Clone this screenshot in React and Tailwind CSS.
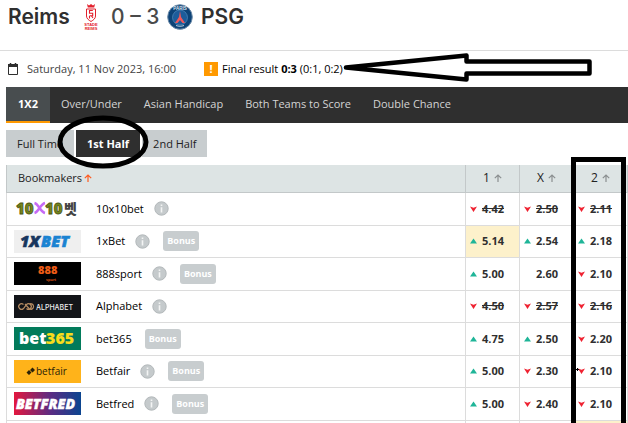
import React from 'react';
import clsx from 'clsx';

const MARKETS = ['1X2', 'Over/Under', 'Asian Handicap', 'Both Teams to Score', 'Double Chance'];

const PERIODS = ['Full Time', '1st Half', '2nd Half'];

const BOOKMAKERS = [
  { name: '10x10bet', info: true, bonus: false, off: true, odds: [['down', '4.42'], ['down', '2.50'], ['down', '2.11']] },
  { name: '1xBet', info: true, bonus: true, best: 0, odds: [['up', '5.14'], ['up', '2.54'], ['up', '2.18']] },
  { name: '888sport', info: true, bonus: true, odds: [['up', '5.00'], [null, '2.60'], ['down', '2.10']] },
  { name: 'Alphabet', info: true, bonus: false, off: true, odds: [['down', '4.50'], ['down', '2.57'], ['down', '2.16']] },
  { name: 'bet365', info: false, bonus: true, odds: [['up', '4.75'], ['up', '2.50'], ['down', '2.20']] },
  { name: 'Betfair', info: true, bonus: true, odds: [['up', '5.00'], ['down', '2.30'], ['down', '2.10']] },
  { name: 'Betfred', info: true, bonus: true, odds: [['up', '5.00'], ['down', '2.40'], ['down', '2.10']] },
];

const ReimsCrest = () => (
  <svg className="w-4 h-[26px]" viewBox="0 0 16 26" fill="none">
    <path d="M4 0l2 1.500L8 0l2 1.500L12 0l-.8 3.500H4.800z" fill="#e2202c" />
    <path d="M3.500 5h9v7c0 2.500-2 4-4.500 5.500C5.500 16 3.500 14.500 3.500 12z" fill="#fff" stroke="#e2202c" />
    <path d="M9.800 6.500H6.500v2.800h3.200v2.500H6.500M6.500 14.500v-2.500M8.500 12l1.500 2" stroke="#e2202c" strokeWidth="1.100" />
    <text x="8" y="21.500" fontSize="4" fontWeight="700" textAnchor="middle" fill="#e2202c" fontFamily="Liberation Sans">STADE</text>
    <text x="8" y="25.500" fontSize="4" fontWeight="700" textAnchor="middle" fill="#e2202c" fontFamily="Liberation Sans">REIMS</text>
  </svg>
);

const ParisCrest = () => (
  <svg className="w-[26px] h-[26px]" viewBox="0 0 26 26">
    <circle cx="13" cy="13" r="12.300" fill="#0d4377" stroke="#6c8aa8" />
    <circle cx="13" cy="13.500" r="7.500" fill="#1d5c9a" stroke="#5d95c4" strokeWidth=".6" />
    <path d="M13 7l1 6 4 6h-2.500L13 16l-2.500 3H8l4-6z" fill="#f0595c" />
    <path d="M9 21.500c2.500 1 5.500 1 8 0" fill="none" stroke="#b9cde0" />
    <text x="13" y="5.500" fontSize="4.500" fontWeight="700" textAnchor="middle" fill="#dfe7ef" fontFamily="Liberation Sans">PARIS</text>
  </svg>
);

const Calendar = () => (
  <svg className="w-3 h-3" viewBox="0 0 12 12" fill="none" stroke="#2f2f2f">
    <path d="M1.500 2.500h9v9h-9z" />
    <path d="M1 2.500h10" strokeWidth="3" />
    <path d="M3.500 0v2M8.500 0v2" strokeWidth="1.500" />
  </svg>
);

const SortArrow = ({ active }) => (
  <svg
    className={clsx('w-2 h-2 shrink-0', active ? 'text-[#ff5a1f]' : 'text-[#8b8f90]')}
    viewBox="0 0 8 8"
    fill="none"
    stroke="currentColor"
    strokeWidth="1.200"
  >
    <path d="M4 8V1M.8 4.200L4 1l3.200 3.200" />
  </svg>
);

const Move = ({ dir }) => (
  <svg className="w-[7px] h-[6px] shrink-0" viewBox="0 0 7 6">
    {dir === 'up' && <path d="M3.500 .5L7 5.500H0z" fill="#1fb598" />}
    {dir === 'down' && <path d="M0 .5l3.500 1.200L7 .5 3.500 6z" fill="#ef2231" />}
  </svg>
);

const Info = () => (
  <svg className="w-[15px] h-[15px]" viewBox="0 0 15 15">
    <circle cx="7.500" cy="7.500" r="6.700" fill="#c5cacc" stroke="#b3b8ba" />
    <path d="M6.700 3.500h1.600v1.600H6.700zM6.700 6.200h1.600v5.300H6.700z" fill="#f3f4f4" />
  </svg>
);

const Logo = ({ name }) => (
  <svg className="w-[67px] h-[23px] shrink-0" viewBox="0 0 67 23" fontFamily="Open Sans" fontWeight="800" role="img" aria-label={name}>
    {name === '10x10bet' && (
      <g fontSize="15">
        <text x="2" y="17" fill="#75851c" stroke="#4b5614" strokeWidth=".8">10</text>
        <path d="M20.500 6c4 1 6 9 10.500 10M31 6c-4.500 1-6.500 9-10.500 10" fill="none" stroke="#c66bf5" strokeWidth="2.600" />
        <text x="31" y="17" fill="#75851c" stroke="#4b5614" strokeWidth=".8">10</text>
        <text x="50" y="16.500" fontSize="14" fill="#444" fontFamily="Noto Sans CJK KR">벳</text>
      </g>
    )}
    {name === '1xBet' && (
      <g fontSize="16" fontStyle="italic" strokeWidth=".6">
        <rect width="67" height="23" fill="#efefef" />
        <text x="6" y="17" fill="#17365e" stroke="#17365e">1X</text>
        <text x="27" y="17" fill="#1a83d2" stroke="#1a83d2">BET</text>
      </g>
    )}
    {name === '888sport' && (
      <g fill="#ee5c16">
        <rect width="67" height="23" fill="#000" />
        <text x="24" y="12" fontSize="11">888</text>
        <text x="32" y="19" fontSize="4" fontWeight="600">sport</text>
      </g>
    )}
    {name === 'Alphabet' && (
      <g>
        <rect width="67" height="23" fill="#131519" />
        <path d="M9.500 9.500a2.800 2.800 0 1 0 0 4l3-4a2.800 2.800 0 1 1 0 4M11 9l4.500 5a2.800 2.800 0 1 0 0-5" fill="none" stroke="#b58c62" strokeWidth="1.200" />
        <text x="22" y="14.500" fontSize="7" fontWeight="500" fill="#eee" fontFamily="Inter">ALPHABET</text>
      </g>
    )}
    {name === 'bet365' && (
      <g fontSize="16">
        <rect width="67" height="23" fill="#027b5b" />
        <text x="5" y="17" fill="#fff">bet</text>
        <text x="32" y="17" fill="#f9dc1c">365</text>
      </g>
    )}
    {name === 'Betfair' && (
      <g fill="#2b2208">
        <rect width="67" height="23" fill="#ffb31a" />
        <path d="M12.500 12.500l2.500-2.500 2.500 2.500-2.500 2.500zM16 10l2.500-2.500L21 10l-2.500 2.500z" />
        <text x="22" y="15" fontSize="10" fontWeight="500">betfair</text>
      </g>
    )}
    {name === 'Betfred' && (
      <g>
        <defs>
          <linearGradient id="fred">
            <stop offset="0" stopColor="#e3173e" />
            <stop offset=".55" stopColor="#5a2c83" />
            <stop offset="1" stopColor="#0b4590" />
          </linearGradient>
        </defs>
        <rect width="67" height="23" fill="url(#fred)" />
        <text x="2" y="17" fontSize="14" fontStyle="italic" fill="#fff" stroke="#fff" strokeWidth=".4">BETFRED</text>
      </g>
    )}
  </svg>
);

const Annotations = () => (
  <svg className="absolute left-0 top-0 w-[628px] h-[430px] pointer-events-none" viewBox="0 0 628 430" fill="none" stroke="#000" strokeWidth="5">
    <path d="M346 67.500L466.500 55.500V61.500H589.500V73.500H466.500V79.500z" strokeWidth="4.500" strokeLinejoin="round" />
    <ellipse cx="103" cy="142" rx="43" ry="24" />
    <path d="M573.500 440V159.500H623.500V440" />
    <path d="M576 369.500h3M577.500 368v3" strokeWidth="1" />
  </svg>
);

export default function App() {
  return (
    <div className="relative h-screen overflow-hidden bg-white font-['Open_Sans','Noto_Sans',sans-serif] text-[11px] leading-4 text-black">
      <header className="flex h-[51px] items-center border-b border-[#dcdcdc] pb-4 pl-2 font-['Inter',sans-serif] text-[21px] leading-6 text-[#2f2f2f]">
        <h1 className="flex items-center font-semibold">
          <span className="w-[75px]">Reims</span>
          <ReimsCrest />
          <span className="w-[68px] pl-3 font-medium text-[#4a4a4a] whitespace-nowrap">0 – 3</span>
          <ParisCrest />
          <span className="pl-2">PSG</span>
        </h1>
      </header>

      <div className="flex h-9 items-center pl-[7px]">
        <Calendar />
        <span className="pl-2 text-[#444]">Saturday, 11 Nov 2023, 16:00</span>
        <span className="ml-7 flex h-[14px] w-[14px] items-center justify-center bg-[#ff9900] font-bold text-white">!</span>
        <span className="pl-1">
          Final result <strong>0:3</strong> (0:1, 0:2)
        </span>
      </div>

      <nav className="ml-1.5 flex h-9 bg-[#2f2f2f]">
        {MARKETS.map((market, i) => (
          <button
            key={market}
            className={clsx(
              'border-b-2',
              i === 0 ? 'border-[#ff9900] bg-[#484d4f] px-3 font-bold text-white' : 'border-transparent px-[11px] font-medium text-[#d4d4d4]'
            )}
          >
            {market}
          </button>
        ))}
      </nav>

      <div className="ml-1.5 mt-[7px] flex gap-0.5">
        {PERIODS.map((period, i) => (
          <button
            key={period}
            className={clsx('h-[27px] px-[11px]', i === 1 ? 'bg-[#2f2f2f] font-bold text-white' : 'bg-[#c8cdcf] text-[#222]')}
          >
            {period}
          </button>
        ))}
      </div>

      <div className="ml-1.5 mt-2">
        <table className="w-full table-fixed border-collapse">
          <thead>
            <tr className="h-[27px] bg-[#dde4e4] text-[#222]">
              <th className="border-b border-l border-[#c3c8c9] pl-[11px] text-left font-normal">
                <span className="flex items-center gap-0.5">
                  Bookmakers <SortArrow active />
                </span>
              </th>
              {['1', 'X', '2'].map((outcome) => (
                <th key={outcome} className="w-[54px] border-x border-b border-[#c3c8c9] font-normal">
                  <span className="flex items-center justify-center gap-1 text-xs">
                    {outcome} <SortArrow />
                  </span>
                </th>
              ))}
            </tr>
          </thead>
          <tbody>
            {BOOKMAKERS.map((b) => (
              <tr key={b.name} className="border-b border-[#dcdcdc] odd:h-[33px] even:h-8">
                <td className="border-l border-[#dcdcdc] pl-[7px]">
                  <div className="flex items-center">
                    <Logo name={b.name} />
                    <a href="#" className="pl-[15px]">{b.name}</a>
                    {b.info && <span className="pl-[10px]"><Info /></span>}
                    {b.bonus && (
                      <button className="ml-[13px] h-5 rounded-[3px] bg-[#c8cdcf] px-1 text-[9px] font-bold text-white">Bonus</button>
                    )}
                  </div>
                </td>
                {b.odds.map(([dir, value], i) => (
                  <td key={i} className={clsx('border-x border-[#dcdcdc]', b.best === i && 'bg-[#fdf1cb]')}>
                    <div className={clsx('flex items-center gap-[5px] pl-1 font-bold text-[#2f2f2f]', b.off && 'line-through')}>
                      <Move dir={dir} />
                      {value}
                    </div>
                  </td>
                ))}
              </tr>
            ))}
            <tr className="h-8">
              <td className="border-l border-[#dcdcdc]" />
              <td className="border-x border-[#dcdcdc]" />
              <td className="border-x border-[#dcdcdc]" />
              <td className="border-x border-[#dcdcdc] bg-[#fdf1cb]" />
            </tr>
          </tbody>
        </table>
      </div>

      <Annotations />
    </div>
  );
}
